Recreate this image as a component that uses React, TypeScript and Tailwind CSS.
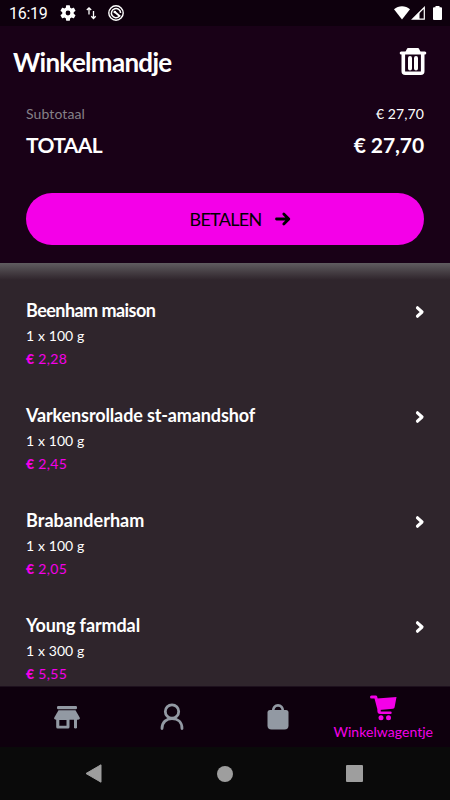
import clsx from "clsx";

interface CartItem {
  id: number;
  name: string;
  quantity: string;
  price: string;
  tracking: string;
}

const ITEMS: CartItem[] = [
  { id: 1, name: "Beenham maison",              quantity: "1 x 100 g", price: "2,28", tracking: "tracking-[-0.55px]" },
  { id: 2, name: "Varkensrollade st-amandshof", quantity: "1 x 100 g", price: "2,45", tracking: "tracking-[-0.13px]" },
  { id: 3, name: "Brabanderham",                quantity: "1 x 100 g", price: "2,05", tracking: "tracking-[0.05px]" },
  { id: 4, name: "Young farmdal",               quantity: "1 x 300 g", price: "5,55", tracking: "tracking-[-0.1px]" },
];

function StatusBar() {
  return (
    <div className="flex h-[26px] shrink-0 items-center justify-between bg-[#0e000d] pl-[9px] pr-[8px] text-white">
      <div className="flex items-center">
        <span className="w-[51px] pt-[2px] font-[Roboto,sans-serif] text-[16px] leading-[26px] tracking-[-0.3px]">16:19</span>
        <svg width="16" height="16" viewBox="2 2 20 20" fill="currentColor">
          <path d="M19.14 12.94c.04-.3.06-.61.06-.94 0-.32-.02-.64-.07-.94l2.03-1.58a.49.49 0 0 0 .12-.61l-1.92-3.32a.488.488 0 0 0-.59-.22l-2.39.96c-.5-.38-1.03-.7-1.62-.94l-.36-2.54a.484.484 0 0 0-.48-.41h-3.84c-.24 0-.43.17-.47.41l-.36 2.54c-.59.24-1.13.57-1.62.94l-2.39-.96c-.22-.08-.47 0-.59.22L2.74 8.87c-.12.21-.08.47.12.61l2.03 1.58c-.05.3-.09.63-.09.94s.02.64.07.94l-2.03 1.58a.49.49 0 0 0-.12.61l1.92 3.32c.12.22.37.29.59.22l2.39-.96c.5.38 1.03.7 1.62.94l.36 2.54c.05.24.24.41.48.41h3.84c.24 0 .44-.17.47-.41l.36-2.54c.59-.24 1.13-.56 1.62-.94l2.39.96c.22.08.47 0 .59-.22l1.92-3.32c.12-.22.07-.47-.12-.61l-2.01-1.58zM12 15a3 3 0 1 1 0-6 3 3 0 0 1 0 6z" />
        </svg>
        <svg className="ml-[10px]" width="12" height="14" viewBox="0 0 12 14" fill="none" stroke="currentColor" strokeWidth="1.3">
          <path d="M3 8.5V2M.8 4L3 1.8 5.200 4M7.500 5v7.500M5.300 10.300l2.200 2.200 2.200-2.200" />
        </svg>
        <svg className="ml-[10px]" width="16" height="16" viewBox="0 0 16 16" fill="none" stroke="currentColor">
          <circle cx="8" cy="8" r="7.200" strokeWidth="1.400" />
          <path d="M11.300 11.300A4.600 4.600 0 1 1 12.600 8" strokeWidth="1.500" />
          <path d="M6.200 6.500l6 5" strokeWidth="1.900" />
          <circle cx="6.800" cy="7" r="1.300" fill="currentColor" stroke="none" />
        </svg>
      </div>
      <div className="flex items-center">
        <svg width="16" height="14" viewBox="0 0 16 14" fill="currentColor">
          <path d="M0 3.200C4.500-.7 11.500-.7 16 3.200L8 13.500z" />
        </svg>
        <svg className="ml-[1px]" width="15" height="14" viewBox="0 0 15 14">
          <path d="M13.300 1.500v11.700H1.500z" fill="none" stroke="currentColor" strokeWidth="1.200" />
          <path d="M8.500 6v7H2z" fill="currentColor" />
        </svg>
        <svg className="ml-[7px]" width="9" height="14" viewBox="0 0 9 14" fill="currentColor">
          <path d="M2.500 0h4v1.300H8q1 0 1 1V13q0 1-1 1H1q-1 0-1-1V2.300q0-1 1-1h1.500z" />
        </svg>
      </div>
    </div>
  );
}

function TrashIcon() {
  return (
    <svg className="mb-[3px]" width="28" height="28" viewBox="0 0 28 28" fill="none" stroke="white" strokeLinecap="round" strokeLinejoin="round">
      <path d="M2.200 6h23.600" strokeWidth="3" />
      <path d="M7.500 5L9 2h10l1.500 3z" fill="white" strokeWidth="2" />
      <path d="M4.300 7v17.200q0 2 2 2h15.400q2 0 2-2V7" strokeWidth="3.600" />
      <path d="M11 11v10.500M17 11v10.500" strokeWidth="4" />
    </svg>
  );
}

function CartRow({ item }: { item: CartItem }) {
  return (
    <li className="flex h-[105px] shrink-0 justify-between">
      <div>
        <h2 className={clsx("h-[28px] whitespace-nowrap text-[18px] font-bold leading-[28px]", item.tracking)}>
          {item.name}
        </h2>
        <p className="h-[23px] text-[14px] leading-[24px] tracking-[0.1px]">{item.quantity}</p>
        <p className="h-[23px] text-[14px] leading-[23px] tracking-[0.3px] text-[#f400e8]">
          <span className="font-black">€</span> {item.price}
        </p>
      </div>
      <svg className="mr-[-1px] mt-[9px]" width="11" height="14" viewBox="0 0 11 14" fill="none" stroke="white" strokeWidth="3.200" strokeLinecap="round" strokeLinejoin="round">
        <path d="M3.500 2.800L8 7l-4.500 4.200" />
      </svg>
    </li>
  );
}

function TabBar() {
  return (
    <nav className="grid h-[61px] shrink-0 grid-cols-4 border-t border-[#1d101d] bg-[#0e000d] px-[14px] text-[#9299a3]">
      <div className="flex justify-center pt-[19px]">
        <svg width="26" height="23" viewBox="0 0 26 23" fill="currentColor">
          <rect x="3" y="0" width="20" height="3.300" rx="1.200" />
          <path d="M4.500 4.300h17l4.200 7.200q.5 2.200-1.700 2.200H2Q-.2 13.700.3 11.500z" />
          <path fillRule="evenodd" d="M2.200 13h13.300v8q0 1.500-1.500 1.500H3.700q-1.500 0-1.500-1.500zM5.300 14v5.800h7.200V14z" />
          <path d="M20 13h3v8.300q0 1.200-1.500 1.200T20 21.300z" />
        </svg>
      </div>
      <div className="flex justify-center pt-[16px]">
        <svg width="24" height="27" viewBox="0 0 24 27" fill="none" stroke="currentColor" strokeWidth="2.800" strokeLinecap="round">
          <circle cx="12" cy="8.500" r="6.700" />
          <path d="M2 25.500C2 19 6.500 15.700 12 15.700S22 19 22 25.500" />
        </svg>
      </div>
      <div className="flex justify-center pt-[16px]">
        <svg width="22" height="27" viewBox="0 0 22 27">
          <path d="M6 8.500C6 .2 16 .2 16 8.500" fill="none" stroke="currentColor" strokeWidth="2.800" />
          <path d="M3 7h16q2.500 0 2.500 2.500V22.500q0 4-4 4h-13q-4 0-4-4V9.500Q.5 7 3 7z" fill="currentColor" />
        </svg>
      </div>
      <div className="flex flex-col items-center pt-[8px] text-[#f400e8]">
        <svg width="27" height="26" viewBox="0 0 27 26" fill="currentColor">
          <path d="M1.500 2h4.200L9.400 16.200" fill="none" stroke="currentColor" strokeWidth="3" strokeLinecap="round" strokeLinejoin="round" />
          <path d="M7 3.500L26.500 2l-1.900 10.300q-.2 1.400-1.600 1.500L9.500 15z" />
          <path d="M9 14.500q-1.300 3.300 1.500 3.300h10" fill="none" stroke="currentColor" strokeWidth="2.400" strokeLinecap="round" />
          <circle cx="11" cy="22.800" r="2.500" />
          <circle cx="18.500" cy="22.800" r="2.500" />
        </svg>
        <span className="text-[14px] leading-[22px] tracking-[0.05px]">Winkelwagentje</span>
      </div>
    </nav>
  );
}

export default function App() {
  return (
    <div className="flex h-[800px] w-[450px] flex-col overflow-hidden bg-[#2f252c] font-[Lato,sans-serif] text-white">
      <StatusBar />

      <header className="flex h-[237px] shrink-0 flex-col bg-[#190117]">
        <div className="flex h-[72px] items-center justify-between pl-[13px] pr-[23px]">
          <h1 className="text-[26px] font-bold leading-[32px] tracking-[-0.7px]">Winkelmandje</h1>
          <TrashIcon />
        </div>
        <div className="flex h-[32px] items-center justify-between px-[26px] pb-[2px] text-[14px]">
          <span className="tracking-[0.1px] text-[#858087]">Subtotaal</span>
          <span className="tracking-[0.1px]">€ 27,70</span>
        </div>
        <div className="flex h-[30px] items-center justify-between px-[26px] text-[21px] leading-[30px]">
          <span className="font-bold tracking-[-0.6px]">TOTAAL</span>
          <span className="font-bold tracking-[-0.1px]">€ 27,70</span>
        </div>
        <button className="mx-[26px] mt-[33px] flex h-[52px] shrink-0 items-center justify-center gap-[13px] rounded-full bg-[#f400e8] pl-[30px] text-black">
          <span className="text-[18px] font-normal tracking-[-0.7px]">BETALEN</span>
          <svg width="16" height="14" viewBox="0 0 16 14" fill="none" stroke="currentColor" strokeWidth="2.800" strokeLinecap="round" strokeLinejoin="round">
            <path d="M1.500 7h12M8.800 2l5 5-5 5" />
          </svg>
        </button>
      </header>

      <main className="min-h-0 flex-1 overflow-hidden">
        <div className="h-[17px] bg-linear-to-b from-[#605d60] to-[#2f252c]" />
        <ul className="flex flex-col px-[26px] pt-[16px]">
          {ITEMS.map((item) => (
            <CartRow key={item.id} item={item} />
          ))}
        </ul>
      </main>

      <TabBar />

      {/* Android navigation */}
      <div className="flex h-[53px] shrink-0 items-center justify-between bg-[#0a0a0a] pl-[85px] pr-[87px] text-[#9e9e9e]">
        <svg width="18" height="19" viewBox="0 0 18 19" fill="currentColor">
          <path d="M1 9.500L16 .8v17.400z" stroke="currentColor" strokeLinejoin="round" />
        </svg>
        <div className="size-[16px] rounded-full bg-current" />
        <div className="size-[17px] rounded-[1px] bg-current" />
      </div>
    </div>
  );
}
